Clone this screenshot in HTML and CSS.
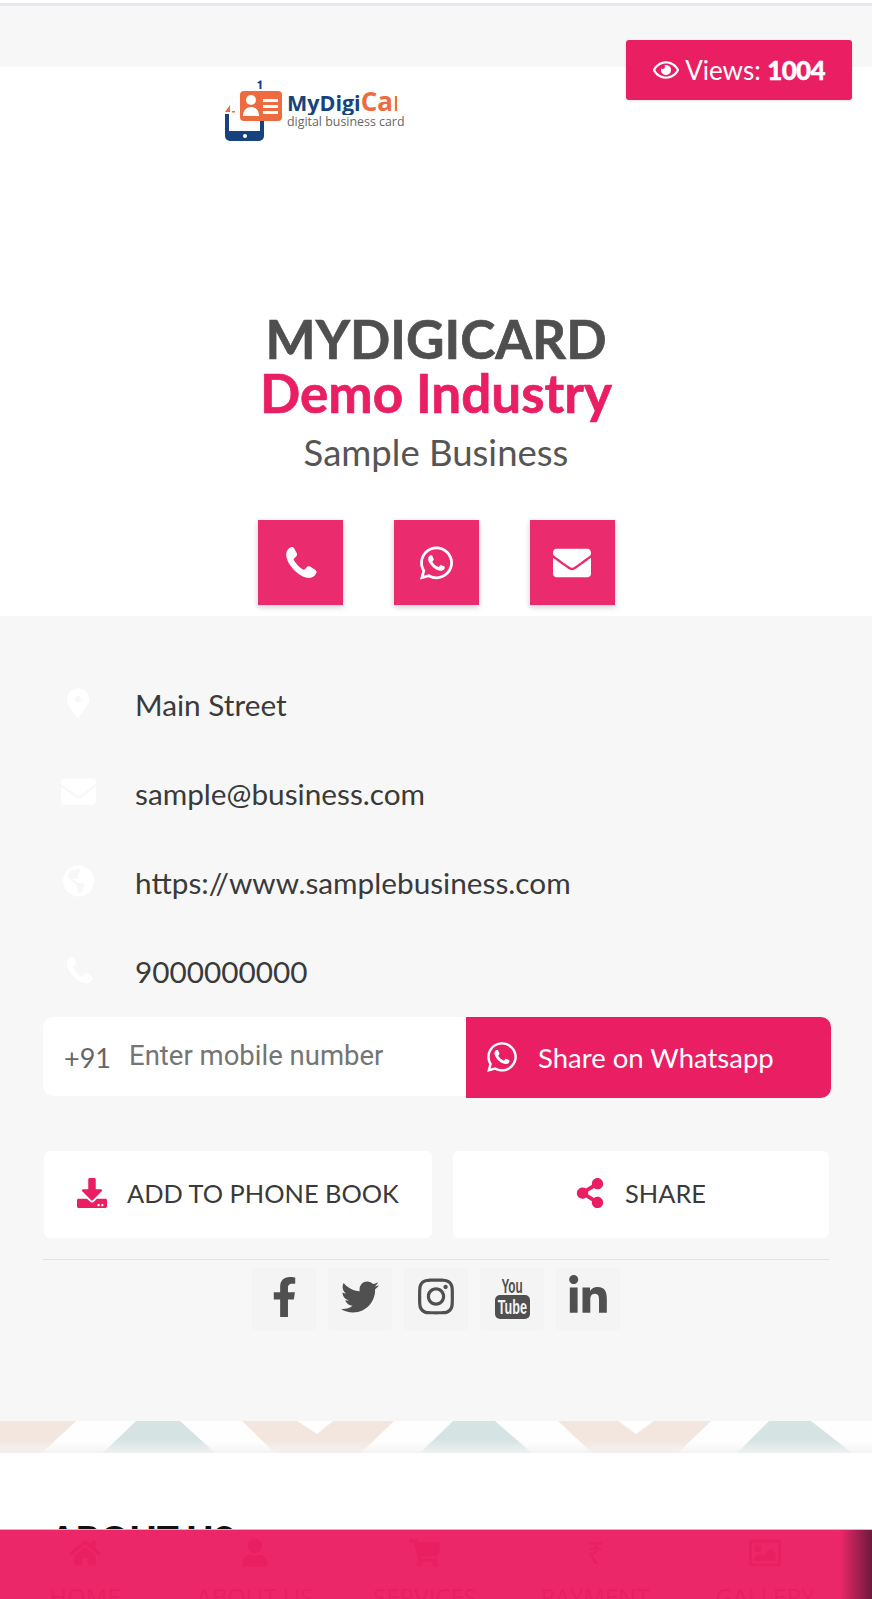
FILE: index.html
```html
<!DOCTYPE html>
<html lang="en">
<head>
    <meta charset="UTF-8">
    <meta name="viewport" content="width=device-width, initial-scale=1.0">
    <title>MyDigiCard</title>
    <link rel="stylesheet" href="styles.css">
</head>
<body>
    <div class="page">
        <div class="top-line"></div>
        <div class="top-strip"></div>

        <div class="views-badge">
            <svg class="eye-icon" viewBox="0 0 576 512"><path d="M288 144a110.94 110.94 0 0 0-31.24 5 55.4 55.4 0 0 1 7.24 27 56 56 0 0 1-56 56 55.4 55.4 0 0 1-27-7.24A111.71 111.71 0 1 0 288 144zm284.52 97.4C518.29 135.59 410.93 64 288 64S57.68 135.64 3.48 241.41a32.35 32.35 0 0 0 0 29.19C57.71 376.41 165.07 448 288 448s230.32-71.64 284.52-177.41a32.35 32.35 0 0 0 0-29.19zM288 400c-98.65 0-189.09-55-237.93-144C98.91 167 189.34 112 288 112s189.09 55 237.93 144C477.1 345 386.66 400 288 400z"/></svg>
            <span>Views: <b>1004</b></span>
        </div>

        <section class="hero">
            <div class="logo">
                <svg class="logo-mark" viewBox="0 0 60 64">
                    <path d="M33 5l3-2.500h1.500V11h-2V5.500z" fill="#16437e"/>
                    <path d="M1 34l5-7v7zM8 33h3v1.500H8z" fill="#ee6a3f"/>
                    <path d="M1 36h4v17h31V40h4v18a5 5 0 0 1-5 5H6a5 5 0 0 1-5-5z" fill="#16437e"/>
                    <circle cx="21" cy="58" r="2" fill="#fff"/>
                    <rect x="16" y="13" width="42" height="30" rx="4" fill="#ee6a3f"/>
                    <circle cx="27" cy="22" r="5" fill="#fff"/>
                    <path d="M19 38c0-6 4-9 8-9s8 3 8 9z" fill="#fff"/>
                    <path d="M39 21h15v3H39zM39 27h15v3H39zM39 33h15v3H39z" fill="#fff"/>
                </svg>
                <div class="logo-text">
                    <div class="logo-name">MyDigi<span>Card</span></div>
                    <div class="logo-sub">digital business card</div>
                </div>
            </div>

            <h1 class="biz-name">MYDIGICARD</h1>
            <h2 class="biz-industry">Demo Industry</h2>
            <p class="biz-type">Sample Business</p>

            <div class="hero-actions">
                <a class="square-btn"><svg class="btn-phone" viewBox="0 0 24 24"><path d="M5.500 1.500C4 2 2.500 3.500 2.200 6 2 10 5 15 9 18.500c3.500 3 7 4.500 10 4 2-.5 3.500-2 4-3.500.2-1-.5-1.500-1-2l-3.500-2.200c-1-.5-1.700-.3-2.300.4L15 16.600c-.5.4-1 .4-1.600.1-2.400-1.400-4.900-4.200-5.900-6.200-.3-.5-.2-1.100.3-1.500L9 7.800c.7-.6.8-1.400.4-2.300L7.600 2.200c-.4-.7-1.300-1-2.100-.7z"/></svg></a>
                <a class="square-btn"><svg class="btn-whatsapp" viewBox="0 0 448 512"><path d="M380.9 97.1C339 55.1 283.2 32 223.9 32c-122.4 0-222 99.6-222 222 0 39.1 10.2 77.3 29.6 111L0 480l117.7-30.9c32.4 17.7 68.9 27 106.1 27h.1c122.3 0 224.1-99.6 224.1-222 0-59.3-25.2-115-67.1-157zm-157 341.6c-33.2 0-65.7-8.9-94-25.7l-6.7-4-69.8 18.3L72 359.2l-4.4-7c-18.5-29.4-28.2-63.3-28.2-98.2 0-101.7 82.8-184.5 184.6-184.5 49.3 0 95.6 19.2 130.4 54.1 34.8 34.9 56.2 81.2 56.1 130.5 0 101.8-84.9 184.6-186.6 184.6zm101.2-138.2c-5.5-2.8-32.8-16.2-37.9-18-5.1-1.9-8.8-2.8-12.5 2.8-3.7 5.6-14.3 18-17.6 21.8-3.2 3.7-6.5 4.2-12 1.4-32.6-16.3-54-29.1-75.5-66-5.7-9.8 5.7-9.1 16.3-30.3 1.8-3.7.9-6.9-.5-9.7-1.4-2.8-12.5-30.1-17.1-41.2-4.5-10.8-9.1-9.3-12.5-9.5-3.2-.2-6.9-.2-10.6-.2-3.7 0-9.7 1.4-14.8 6.9-5.1 5.6-19.4 19-19.4 46.3 0 27.3 19.9 53.7 22.6 57.4 2.8 3.7 39.1 59.7 94.8 83.8 35.2 15.2 49 16.5 66.6 13.9 10.7-1.6 32.8-13.4 37.4-26.4 4.6-13 4.6-24.1 3.2-26.4-1.3-2.5-5-3.9-10.5-6.6z"/></svg></a>
                <a class="square-btn"><svg class="btn-mail" viewBox="0 0 512 512"><path d="M502.3 190.8c3.9-3.1 9.7-.2 9.7 4.7V400c0 26.5-21.5 48-48 48H48c-26.5 0-48-21.5-48-48V195.6c0-5 5.7-7.8 9.7-4.7 22.4 17.4 52.1 39.5 154.1 113.6 21.1 15.4 56.7 47.8 92.2 47.6 35.7.3 72-32.8 92.3-47.6 102-74.1 131.6-96.3 154-113.7zM256 320c23.2.4 56.6-29.2 73.4-41.4 132.7-96.3 142.8-104.7 173.4-128.7 5.8-4.5 9.2-11.5 9.2-18.9v-19c0-26.5-21.5-48-48-48H48C21.5 64 0 85.5 0 112v19c0 7.4 3.4 14.3 9.2 18.9 30.6 23.9 40.7 32.4 173.4 128.7 16.8 12.2 50.2 41.8 73.4 41.4z"/></svg></a>
            </div>
        </section>

        <section class="details">
            <ul class="contact-list">
                <li>
                    <span class="contact-icon"><svg class="w-marker" viewBox="0 0 384 512"><path d="M172.268 501.67C26.97 291.031 0 269.413 0 192 0 85.961 85.961 0 192 0s192 85.961 192 192c0 77.413-26.97 99.031-172.268 309.67-9.535 13.774-29.93 13.773-39.464 0zM192 250c32 0 58-26 58-58s-26-58-58-58-58 26-58 58 26 58 58 58z"/></svg></span>
                    Main Street
                </li>
                <li>
                    <span class="contact-icon"><svg class="w-mail" viewBox="0 0 512 512"><path d="M502.3 190.8c3.9-3.1 9.7-.2 9.7 4.7V400c0 26.5-21.5 48-48 48H48c-26.5 0-48-21.5-48-48V195.6c0-5 5.7-7.8 9.7-4.7 22.4 17.4 52.1 39.5 154.1 113.6 21.1 15.4 56.7 47.8 92.2 47.6 35.7.3 72-32.8 92.3-47.6 102-74.1 131.6-96.3 154-113.7zM256 320c23.2.4 56.6-29.2 73.4-41.4 132.7-96.3 142.8-104.7 173.4-128.7 5.8-4.5 9.2-11.5 9.2-18.9v-19c0-26.5-21.5-48-48-48H48C21.5 64 0 85.5 0 112v19c0 7.4 3.4 14.3 9.2 18.9 30.6 23.9 40.7 32.4 173.4 128.7 16.8 12.2 50.2 41.8 73.4 41.4z"/></svg></span>
                    sample@business.com
                </li>
                <li>
                    <span class="contact-icon"><svg class="w-globe" viewBox="0 0 496 512"><path d="M248 8C111.03 8 0 119.03 0 256s111.03 248 248 248 248-111.03 248-248S384.97 8 248 8zm82.29 357.6c-3.9 3.88-7.99 7.95-11.31 11.28-2.99 3-5.1 6.7-6.17 10.71-1.51 5.66-2.73 11.38-4.77 16.87l-17.39 46.85c-13.76 3-28 4.69-42.65 4.69v-27.38c1.69-12.62-7.64-36.26-22.63-51.25-6-6-9.37-14.14-9.37-22.63v-32.01c0-11.64-6.27-22.34-16.46-27.97-14.37-7.95-34.81-19.06-48.81-26.11-11.48-5.78-22.1-13.14-31.65-21.75l-.8-.72a114.792 114.792 0 0 1-18.06-20.74c-9.38-13.77-24.66-36.42-34.59-51.14 20.47-45.5 57.36-82.04 103.2-101.89l24.01 12.01C203.48 89.74 216 82.01 216 70.11v-11.3c7.99-1.29 16.12-2.11 24.39-2.42l28.3 28.3c6.25 6.25 6.25 16.38 0 22.63L264 112l-10.34 10.34c-3.12 3.12-3.12 8.19 0 11.31l4.69 4.69c3.12 3.12 3.12 8.19 0 11.31l-8 8a8.008 8.008 0 0 1-5.66 2.34h-8.99c-2.08 0-4.08.81-5.58 2.27l-9.92 9.65a8.008 8.008 0 0 0-1.58 9.31l15.59 31.19c2.66 5.32-1.21 11.58-7.15 11.58h-5.64c-1.93 0-3.79-.7-5.24-1.96l-9.28-8.06a16.017 16.017 0 0 0-15.55-3.1l-31.17 10.39a11.95 11.95 0 0 0-8.17 11.34c0 4.53 2.56 8.66 6.61 10.69l11.08 5.54c9.41 4.71 19.79 7.16 30.31 7.16s22.59 27.29 32 32h66.75c8.49 0 16.62 3.37 22.63 9.37l13.69 13.69a30.503 30.503 0 0 1 8.93 21.57 46.536 46.536 0 0 1-13.72 32.98z"/></svg></span>
                    https://www.samplebusiness.com
                </li>
                <li>
                    <span class="contact-icon"><svg class="w-phone" viewBox="0 0 24 24"><path d="M5.500 1.500C4 2 2.500 3.500 2.200 6 2 10 5 15 9 18.500c3.500 3 7 4.500 10 4 2-.5 3.500-2 4-3.500.2-1-.5-1.500-1-2l-3.500-2.200c-1-.5-1.700-.3-2.300.4L15 16.600c-.5.4-1 .4-1.600.1-2.400-1.400-4.900-4.200-5.900-6.200-.3-.5-.2-1.100.3-1.500L9 7.800c.7-.6.8-1.400.4-2.300L7.600 2.200c-.4-.7-1.300-1-2.100-.7z"/></svg></span>
                    9000000000
                </li>
            </ul>

            <form class="share-form">
                <div class="share-input">
                    <span class="dial-code">+91</span>
                    <input type="text" placeholder="Enter mobile number">
                </div>
                <button type="button" class="share-btn">
                    <svg viewBox="0 0 448 512"><path d="M380.9 97.1C339 55.1 283.2 32 223.9 32c-122.4 0-222 99.6-222 222 0 39.1 10.2 77.3 29.6 111L0 480l117.7-30.9c32.4 17.7 68.9 27 106.1 27h.1c122.3 0 224.1-99.6 224.1-222 0-59.3-25.2-115-67.1-157zm-157 341.6c-33.2 0-65.7-8.9-94-25.7l-6.7-4-69.8 18.3L72 359.2l-4.4-7c-18.5-29.4-28.2-63.3-28.2-98.2 0-101.7 82.8-184.5 184.6-184.5 49.3 0 95.6 19.2 130.4 54.1 34.8 34.9 56.2 81.2 56.1 130.5 0 101.8-84.9 184.6-186.6 184.6zm101.2-138.2c-5.5-2.8-32.8-16.2-37.9-18-5.1-1.9-8.8-2.8-12.5 2.8-3.7 5.6-14.3 18-17.6 21.8-3.2 3.7-6.5 4.2-12 1.4-32.6-16.3-54-29.1-75.5-66-5.7-9.8 5.7-9.1 16.3-30.3 1.8-3.7.9-6.9-.5-9.7-1.4-2.8-12.5-30.1-17.1-41.2-4.5-10.8-9.1-9.3-12.5-9.5-3.2-.2-6.9-.2-10.6-.2-3.7 0-9.7 1.4-14.8 6.9-5.1 5.6-19.4 19-19.4 46.3 0 27.3 19.9 53.7 22.6 57.4 2.8 3.7 39.1 59.7 94.8 83.8 35.2 15.2 49 16.5 66.6 13.9 10.7-1.6 32.8-13.4 37.4-26.4 4.6-13 4.6-24.1 3.2-26.4-1.3-2.5-5-3.9-10.5-6.6z"/></svg>
                    Share on Whatsapp
                </button>
            </form>

            <div class="card-actions">
                <a class="card-btn card-btn-add">
                    <svg viewBox="0 0 512 512"><path d="M216 0h80c13.3 0 24 10.7 24 24v168h87.7c17.8 0 26.7 21.5 14.1 34.1L269.7 378.3c-7.5 7.5-19.8 7.5-27.3 0L90.1 226.1c-12.6-12.6-3.7-34.1 14.1-34.1H192V24c0-13.3 10.7-24 24-24zm296 376v112c0 13.3-10.7 24-24 24H24c-13.3 0-24-10.7-24-24V376c0-13.3 10.7-24 24-24h146.7l49 49c20.1 20.1 52.5 20.1 72.6 0l49-49H488c13.3 0 24 10.7 24 24zm-124 88c0-11-9-20-20-20s-20 9-20 20 9 20 20 20 20-9 20-20zm64 0c0-11-9-20-20-20s-20 9-20 20 9 20 20 20 20-9 20-20z"/></svg>
                    ADD TO PHONE BOOK
                </a>
                <a class="card-btn card-btn-share">
                    <svg viewBox="0 0 448 512"><path d="M352 320c-22.608 0-43.387 7.819-59.79 20.895l-102.486-64.054a96.551 96.551 0 0 0 0-41.683l102.486-64.054C308.613 184.181 329.392 192 352 192c53.019 0 96-42.981 96-96S405.019 0 352 0s-96 42.981-96 96c0 7.158.79 14.13 2.276 20.841L155.79 180.895C139.387 167.819 118.608 160 96 160c-53.019 0-96 42.981-96 96s42.981 96 96 96c22.608 0 43.387-7.819 59.79-20.895l102.486 64.054A96.301 96.301 0 0 0 256 416c0 53.019 42.981 96 96 96s96-42.981 96-96-42.981-96-96-96z"/></svg>
                    SHARE
                </a>
            </div>

            <div class="socials">
                <a class="social"><svg class="s-fb" viewBox="0 0 320 512"><path d="M279.14 288l14.22-92.66h-88.91v-60.13c0-25.35 12.42-50.06 52.24-50.06h40.42V6.26S260.43 0 225.36 0c-73.22 0-121.08 44.38-121.08 124.72v70.62H22.89V288h81.39v224h100.17V288z"/></svg></a>
                <a class="social"><svg class="s-tw" viewBox="0 0 512 512"><path d="M459.37 151.716c.325 4.548.325 9.097.325 13.645 0 138.72-105.583 298.558-298.558 298.558-59.452 0-114.68-17.219-161.137-47.106 8.447.974 16.568 1.299 25.34 1.299 49.055 0 94.213-16.568 130.274-44.832-46.132-.975-84.792-31.188-98.112-72.772 6.498.974 12.995 1.624 19.818 1.624 9.421 0 18.843-1.3 27.614-3.573-48.081-9.747-84.143-51.98-84.143-102.985v-1.299c13.969 7.797 30.214 12.67 47.431 13.319-28.264-18.843-46.781-51.005-46.781-87.391 0-19.492 5.197-37.36 14.294-52.954 51.655 63.675 129.3 105.258 216.365 109.807-1.624-7.797-2.599-15.918-2.599-24.04 0-57.828 46.782-104.934 104.934-104.934 30.213 0 57.502 12.67 76.67 33.137 23.715-4.548 46.456-13.32 66.599-25.34-7.798 24.366-24.366 44.833-46.132 57.827 21.117-2.273 41.584-8.122 60.426-16.243-14.292 20.791-32.161 39.308-52.628 54.253z"/></svg></a>
                <a class="social"><svg class="s-ig" viewBox="0 0 448 512"><path d="M224.1 141c-63.6 0-114.9 51.3-114.9 114.9s51.3 114.9 114.9 114.9S339 319.5 339 255.9 287.7 141 224.1 141zm0 189.6c-41.1 0-74.7-33.5-74.7-74.7s33.5-74.7 74.7-74.7 74.7 33.5 74.7 74.7-33.6 74.7-74.7 74.7zm146.4-194.3c0 14.9-12 26.8-26.8 26.8-14.9 0-26.8-12-26.8-26.8s12-26.8 26.8-26.8 26.8 12 26.8 26.8zm76.1 27.2c-1.7-35.9-9.9-67.7-36.2-93.9-26.2-26.2-58-34.4-93.9-36.2-37-2.1-147.9-2.1-184.9 0-35.8 1.7-67.6 9.9-93.9 36.1s-34.4 58-36.2 93.9c-2.1 37-2.1 147.9 0 184.9 1.7 35.9 9.9 67.7 36.2 93.9s58 34.4 93.9 36.2c37 2.1 147.9 2.1 184.9 0 35.9-1.7 67.7-9.9 93.9-36.2 26.2-26.2 34.4-58 36.2-93.9 2.1-37 2.1-147.8 0-184.8zM398.8 388c-7.8 19.6-22.9 34.7-42.6 42.6-29.5 11.7-99.5 9-132.1 9s-102.7 2.6-132.1-9c-19.6-7.8-34.7-22.9-42.6-42.6-11.7-29.5-9-99.5-9-132.1s-2.6-102.7 9-132.1c7.8-19.6 22.9-34.7 42.6-42.6 29.5-11.7 99.5-9 132.1-9s102.7-2.6 132.1 9c19.6 7.8 34.7 22.9 42.6 42.6 11.7 29.5 9 99.5 9 132.1s2.7 102.7-9 132.1z"/></svg></a>
                <a class="social social-yt">
                    <span class="yt-you"><span>You</span></span>
                    <span class="yt-tube"><span>Tube</span></span>
                </a>
                <a class="social"><svg class="s-in" viewBox="0 0 448 512"><path d="M100.28 448H7.4V148.9h92.88zM53.79 108.1C24.09 108.1 0 83.5 0 53.8a53.79 53.79 0 0 1 107.58 0c0 29.7-24.1 54.3-53.79 54.3zM447.9 448h-92.68V302.4c0-34.7-.7-79.2-48.29-79.2-48.29 0-55.69 37.7-55.69 76.7V448h-92.78V148.9h89.08v40.8h1.3c12.4-23.1 42.69-48.3 87.88-48.3 94 0 111.28 61.9 111.28 142.3V448z"/></svg></a>
            </div>
        </section>

        <svg class="chevrons" viewBox="0 0 872 32" preserveAspectRatio="none">
            <defs>
                <linearGradient id="fade" x1="0" y1="0" x2="0" y2="1">
                    <stop offset="0" stop-color="#f6f6f6" stop-opacity="0"/>
                    <stop offset="0.6" stop-color="#f6f6f6" stop-opacity="0"/>
                    <stop offset="1" stop-color="#f2f2f2" stop-opacity="0.9"/>
                </linearGradient>
            </defs>
            <rect width="872" height="32" fill="#fefefe"/>
            <g fill="#f3e6df">
                <path d="M0 0h76L42 32H0z"/>
                <path d="M242 0h55l20 13 16-13h61l-33 32h-86z"/>
                <path d="M558 0h60l18 13 18-13h57l-33 32h-86z"/>
            </g>
            <g fill="#d5e3e3">
                <path d="M136 0h44l35 32H103z"/>
                <path d="M453 0h42l37 32H420z"/>
                <path d="M769 0h42l41 32H737z"/>
            </g>
            <rect width="872" height="32" fill="url(#fade)"/>
        </svg>

        <section class="about">
            <h3>ABOUT US</h3>
        </section>

        <nav class="bottom-nav">
            <a class="nav-item">
                <svg viewBox="0 0 576 512"><path d="M280.37 148.26L96 300.11V464a16 16 0 0 0 16 16l112.06-.29a16 16 0 0 0 15.92-16V368a16 16 0 0 1 16-16h64a16 16 0 0 1 16 16v95.64a16 16 0 0 0 16 16.05L464 480a16 16 0 0 0 16-16V300L295.67 148.26a12.19 12.19 0 0 0-15.3 0zM571.6 251.47L488 182.56V44.05a12 12 0 0 0-12-12h-56a12 12 0 0 0-12 12v72.61L318.47 43a48 48 0 0 0-61 0L4.34 251.47a12 12 0 0 0-1.6 16.9l25.5 31A12 12 0 0 0 45.15 301l235.22-193.74a12.19 12.19 0 0 1 15.3 0L530.9 301a12 12 0 0 0 16.9-1.6l25.5-31a12 12 0 0 0-1.7-16.93z"/></svg>
                HOME
            </a>
            <a class="nav-item">
                <svg viewBox="0 0 448 512"><path d="M224 256c70.7 0 128-57.3 128-128S294.7 0 224 0 96 57.3 96 128s57.3 128 128 128zm89.6 32h-16.7c-22.2 10.2-46.9 16-72.9 16s-50.6-5.8-72.9-16h-16.7C60.2 288 0 348.2 0 422.4V464c0 26.5 21.5 48 48 48h352c26.5 0 48-21.5 48-48v-41.6c0-74.2-60.2-134.4-134.4-134.4z"/></svg>
                ABOUT US
            </a>
            <a class="nav-item">
                <svg viewBox="0 0 576 512"><path d="M528.12 301.319l47.273-208C578.806 78.301 567.391 64 551.99 64H159.208l-9.166-44.81C147.758 8.021 137.93 0 126.529 0H24C10.745 0 0 10.745 0 24v16c0 13.255 10.745 24 24 24h69.883l70.248 343.435C147.325 417.1 136 435.222 136 456c0 30.928 25.072 56 56 56s56-25.072 56-56c0-15.674-6.447-29.835-16.824-40h209.647C430.447 426.165 424 440.326 424 456c0 30.928 25.072 56 56 56s56-25.072 56-56c0-22.172-12.888-41.332-31.579-50.405l5.517-24.276c3.413-15.018-8.002-29.319-23.403-29.319H218.117l-6.545-32h293.145c11.206 0 20.92-7.754 23.403-18.681z"/></svg>
                SERVICES
            </a>
            <a class="nav-item">
                <span class="nav-rupee">₹</span>
                PAYMENT
            </a>
            <a class="nav-item">
                <svg viewBox="0 0 36 30"><path d="M2 0h32a2 2 0 0 1 2 2v26a2 2 0 0 1-2 2H2a2 2 0 0 1-2-2V2a2 2 0 0 1 2-2zm1 3v24h30V3zM10 6a4 4 0 1 1 0 8 4 4 0 0 1 0-8zM6 24v-4l6-4 4 3 8-9 6 6v8z" fill-rule="evenodd"/></svg>
                GALLERY
            </a>
        </nav>
    </div>
</body>
</html>
```

FILE: styles.css
```css
* {
    box-sizing: border-box;
}
html, body {
    margin: 0;
    padding: 0;
}
body {
    font-family: Lato, "Open Sans", sans-serif;
    background-color: #f7f7f8;
    color: #333;
}
.page {
    position: relative;
    height: 1599px;
    overflow: hidden;
}
.top-line {
    height: 6px;
    border-top: 3px solid #fff;
    background-color: #e7e7f1;
}
.top-strip {
    height: 61px;
}

/* views counter sits over the header */
.views-badge {
    position: absolute;
    top: 40px;
    left: 626px;
    width: 226px;
    height: 60px;
    display: flex;
    align-items: center;
    justify-content: center;
    gap: 6px;
    background-color: #e91e63;
    border-radius: 3px;
    color: #fff;
    font-size: 26px;
    box-shadow: 0 1px 3px rgba(0,0,0,0.12);
}
.views-badge b {
    font-weight: 900;
    letter-spacing: -0.7px;
    -webkit-text-stroke: 0.4px #fff;
}
.eye-icon {
    width: 26px;
    height: 24px;
    fill: #fff;
}

.hero {
    background-color: #fff;
    height: 549px;
    text-align: center;
}
.logo {
    display: flex;
    margin-left: 224px;
    padding-top: 11px;
    height: 245px;
    text-align: left;
}
.logo-mark {
    width: 60px;
    height: 64px;
    flex: none;
}
.logo-text {
    margin-left: 3px;
    padding-top: 13px;
}
.logo-name {
    width: 110px;
    overflow: hidden;
    white-space: nowrap;
    font-family: "Open Sans", sans-serif;
    font-weight: 700;
    font-size: 21.5px;
    line-height: 24px;
    color: #16437e;
}
.logo-name span {
    color: #ee6a3f;
    font-size: 26px;
    line-height: 20px;
}
.logo-sub {
    font-family: "Open Sans", sans-serif;
    font-size: 12.4px;
    line-height: 14px;
    color: #666;
    white-space: nowrap;
}
.biz-name {
    margin: 0;
    font-size: 53px;
    font-weight: 700;
    line-height: 54px;
    color: #4f4f4f;
    -webkit-text-stroke: 0.7px #4f4f4f;
}
.biz-industry {
    margin: 0;
    font-size: 53px;
    font-weight: 700;
    line-height: 54px;
    color: #e91e63;
    -webkit-text-stroke: 0.7px #e91e63;
}
.biz-type {
    margin: 10px 0 0;
    font-size: 36.5px;
    line-height: 44px;
    color: #555;
}
.hero-actions {
    display: flex;
    justify-content: center;
    gap: 51px;
    margin-top: 46px;
}
.square-btn {
    width: 85px;
    height: 85px;
    display: flex;
    align-items: center;
    justify-content: center;
    background-color: #ea2b6d;
    box-shadow: 0 2px 6px rgba(0,0,0,0.2);
}
.square-btn svg {
    fill: #fff;
}
.btn-phone {
    width: 35px;
    height: 35px;
}
.btn-whatsapp {
    width: 33px;
    height: 38px;
}
.btn-mail {
    width: 38px;
    height: 38px;
}

.details {
    height: 805px;
    padding: 0 41px 0 43px;
}
.contact-list {
    list-style: none;
    margin: 0;
    padding: 44px 0 0;
}
.contact-list li {
    display: flex;
    align-items: center;
    height: 89px;
    font-size: 29.75px;
    color: #3a3a3a;
}
.contact-icon {
    width: 92px;
    padding-left: 18px;
    display: flex;
    flex: none;
}
.contact-icon svg {
    fill: #fff;
    margin-top: -4px;
}
.w-marker {
    width: 22px;
    height: 30px;
    margin-left: 6px;
}
.w-mail {
    width: 35px;
    height: 35px;
}
.w-globe {
    width: 31px;
    height: 32px;
    margin-left: 2px;
}
.w-phone {
    width: 30px;
    height: 30px;
    margin-left: 3px;
}

.share-form {
    display: flex;
    margin-top: 1px;
}
.share-input {
    display: flex;
    align-items: center;
    width: 423px;
    height: 79px;
    padding-left: 21px;
    background-color: #fff;
    border-radius: 10px 0 0 10px;
}
.dial-code {
    font-size: 27px;
    color: #666;
    margin-top: 1px;
    width: 65px;
    flex: none;
}
.share-input input {
    border: none;
    outline: none;
    background: transparent;
    width: 330px;
    padding: 0;
    font-family: Roboto, sans-serif;
    font-size: 27.5px;
    margin-top: -3px;
}
.share-input input::placeholder {
    color: #757575;
}
.share-btn {
    display: flex;
    align-items: center;
    gap: 21px;
    width: 365px;
    height: 81px;
    padding: 0 0 0 21px;
    border: none;
    background-color: #e91e63;
    border-radius: 0 10px 10px 0;
    color: #fff;
    font-family: Lato, sans-serif;
    font-size: 27.5px;
}
.share-btn svg {
    width: 30px;
    height: 34px;
    fill: #fff;
    margin-top: -2px;
}

.card-actions {
    display: flex;
    gap: 21px;
    margin-top: 53px;
    margin-left: 1px;
    padding-bottom: 21px;
}
.card-btn {
    display: flex;
    align-items: center;
    height: 87px;
    padding-bottom: 3px;
    background-color: #fff;
    border-radius: 6px;
    font-size: 25.4px;
    color: #3a3a3a;
}
.card-btn svg {
    fill: #e91e63;
    flex: none;
}
.card-btn-add {
    width: 388px;
    padding-left: 33px;
    gap: 20px;
}
.card-btn-add svg {
    width: 30px;
    height: 30px;
}
.card-btn-share {
    width: 376px;
    justify-content: center;
    gap: 21px;
}
.card-btn-share svg {
    width: 28px;
    height: 30px;
}

.socials {
    display: flex;
    justify-content: center;
    gap: 12px;
    border-top: 1px solid #e3e3e3;
    padding-top: 8px;
    margin-right: 2px;
}
.social {
    width: 64px;
    height: 62px;
    padding-bottom: 5px;
    display: flex;
    flex-direction: column;
    align-items: center;
    justify-content: center;
    background-color: #f4f4f4;
    border-radius: 3px;
}
.social svg {
    fill: #505050;
}
.s-fb {
    width: 25px;
    height: 40px;
}
.s-tw {
    width: 38px;
    height: 38px;
}
.s-ig {
    width: 36px;
    height: 41px;
}
.s-in {
    width: 38px;
    height: 43px;
}
.social-yt {
    padding-bottom: 2px;
}
.yt-you {
    display: flex;
    justify-content: center;
    width: 35px;
    height: 18px;
    font-family: "Liberation Sans", sans-serif;
    font-weight: 700;
    font-size: 21px;
    line-height: 18px;
    color: #505050;
}
.yt-you span {
    flex: none;
    transform: scaleX(0.56);
}
.yt-tube {
    display: flex;
    justify-content: center;
    width: 35px;
    height: 24px;
    border-radius: 5px;
    background-color: #505050;
    color: #f4f4f4;
    font-family: "Liberation Sans", sans-serif;
    font-weight: 700;
    font-size: 21px;
    line-height: 24px;
}
.yt-tube span {
    flex: none;
    transform: scaleX(0.6);
}

.chevrons {
    display: block;
    width: 872px;
    height: 32px;
}
.about {
    background-color: #fff;
    height: 146px;
    padding: 63px 0 0 50px;
}
.about h3 {
    margin: 0;
    font-size: 36.5px;
    font-weight: 900;
    line-height: 44px;
    color: #111;
}

.bottom-nav {
    position: fixed;
    left: 0;
    right: 0;
    top: 1529px;
    height: 70px;
    display: flex;
    padding-right: 22px;
    background: linear-gradient(to right, #ec2769 0, #ec2769 840px, #6d1a3c 872px);
    border-top: 1px solid #f8a5c2;
    overflow: hidden;
}
.nav-item {
    flex: 1;
    display: flex;
    flex-direction: column;
    align-items: center;
    padding-top: 9px;
    font-family: "Open Sans", sans-serif;
    font-size: 24px;
    line-height: 30px;
    white-space: nowrap;
    color: #e81f60;
}
.nav-item svg {
    width: 32px;
    height: 28px;
    fill: #e81f60;
    flex: none;
    margin-bottom: 15px;
}
.nav-rupee {
    height: 28px;
    margin-bottom: 15px;
    font-size: 30px;
    line-height: 28px;
}
```
